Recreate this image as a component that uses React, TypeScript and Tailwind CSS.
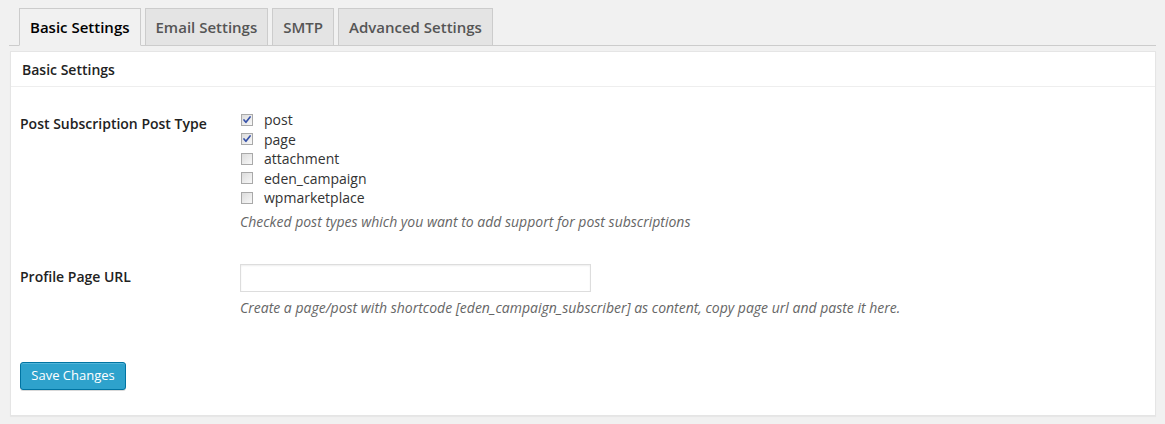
import React from 'react';

const tabs = ['Basic Settings', 'Email Settings', 'SMTP', 'Advanced Settings'];

const postTypes = [
    { name: 'post', checked: true },
    { name: 'page', checked: true },
    { name: 'attachment', checked: false },
    { name: 'eden_campaign', checked: false },
    { name: 'wpmarketplace', checked: false },
];

const Checkbox = ({ checked }: { checked: boolean }) => (
    <span className="w-[12px] h-[12px] border border-[#a9a9a9] bg-gradient-to-br from-[#dcdcdc] to-[#f8f8f8] flex items-center justify-center shrink-0">
        {checked && (
            <svg viewBox="0 0 12 12" className="w-[10px] h-[10px]">
                <path d="M2.4 6 L4.7 8.8 L9.7 2.3" fill="none" stroke="#3651a8" strokeWidth="2" strokeLinecap="round" strokeLinejoin="round" />
            </svg>
        )}
    </span>
);

export default function App() {
    return (
        <div className="min-h-[424px] bg-[#f1f1f1] pt-[8px] pl-[9px] pr-[9px] text-[#444]" style={{ fontFamily: '"Open Sans", "Liberation Sans", sans-serif' }}>
            {/* Tabs */}
            <div className="flex gap-[4px] pl-[10px] border-b border-[#ccc] h-[38px]">
                {tabs.map((t, i) => (
                    <div
                        key={t}
                        className={`h-[38px] px-[10px] border border-[#ccc] flex items-center text-[15px] font-semibold ${i === 0 ? 'bg-[#f1f1f1] text-black border-b-[#f1f1f1]' : 'bg-[#e4e4e4] text-[#555]'}`}
                    >
                        {t}
                    </div>
                ))}
            </div>

            {/* Panel */}
            <div className="mt-[5px] ml-px bg-white border border-[#e5e5e5] shadow-[0_1px_1px_rgba(0,0,0,0.04)]">
                <div className="h-[35px] border-b border-[#eee] px-[11px] flex items-center text-[14px] font-semibold text-[#222]">
                    Basic Settings
                </div>

                <div className="pl-[9px] pt-[23px] pb-[25px]">
                    <div className="flex">
                        <div className="w-[220px] pt-[4px] text-[14px] leading-[19.5px] font-semibold text-[#222]">Post Subscription Post Type</div>
                        <div>
                            {postTypes.map(p => (
                                <div key={p.name} className="flex items-center gap-[11px] h-[19.5px] pl-px text-[14px] text-[#333]">
                                    <Checkbox checked={p.checked} />
                                    <span>{p.name}</span>
                                </div>
                            ))}
                            <p className="mt-[4px] text-[14px] leading-[19px] italic text-[#666]">
                                Checked post types which you want to add support for post subscriptions
                            </p>
                        </div>
                    </div>

                    <div className="flex mt-[33px]">
                        <div className="w-[220px] pt-[3px] text-[14px] leading-[19.5px] font-semibold text-[#222]">Profile Page URL</div>
                        <div>
                            <input type="text" className="block w-[351px] h-[28px] border border-[#ddd] bg-white shadow-[inset_0_1px_2px_rgba(0,0,0,0.07)] outline-none" />
                            <p className="mt-[6px] text-[14px] leading-[19px] italic text-[#666]">
                                Create a page/post with shortcode [eden_campaign_subscriber] as content, copy page url and paste it here.
                            </p>
                        </div>
                    </div>

                    <button className="mt-[45px] h-[28px] w-[106px] rounded-[3px] bg-[#2ea2cc] border border-[#0074a2] text-white text-[13px] shadow-[inset_0_1px_0_rgba(120,200,230,0.5),0_1px_0_rgba(0,0,0,0.15)]">
                        Save Changes
                    </button>
                </div>
            </div>
        </div>
    );
}
